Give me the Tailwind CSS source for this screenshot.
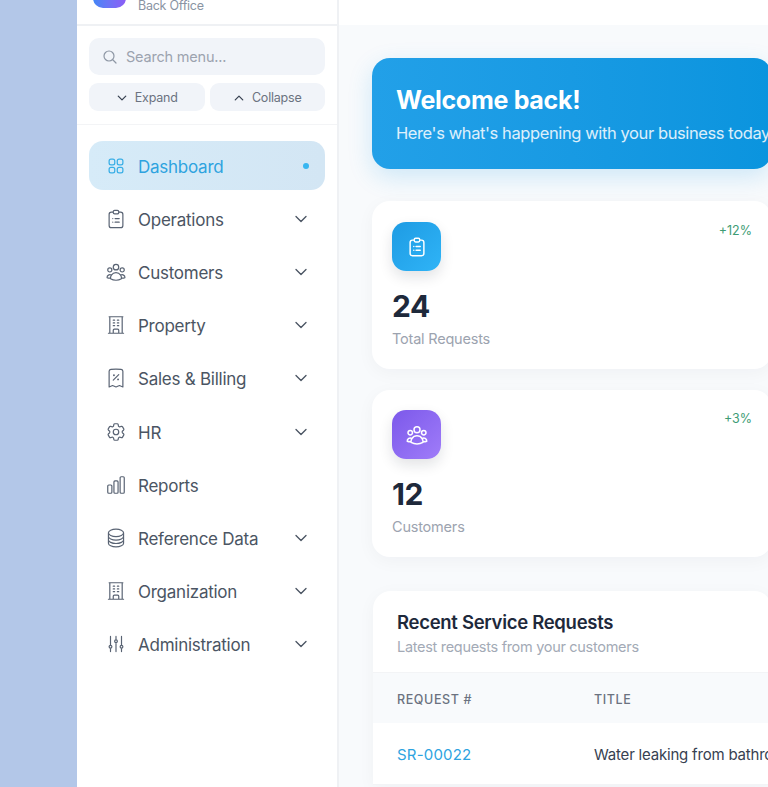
<!DOCTYPE html>
<html lang="en">
<head>
    <meta charset="UTF-8">
    <meta name="viewport" content="width=device-width, initial-scale=1.0">
    <title>Back Office</title>
    <script src="https://cdn.jsdelivr.net/npm/@tailwindcss/browser@4"></script>
</head>
<body class="bg-[#b3c7e8] h-[787px] overflow-hidden font-['Inter',sans-serif]">
    <div class="ml-[77px] w-[760px] h-[787px] flex bg-[#f8fafc]">
        <!-- sidebar -->
        <aside class="w-[262px] shrink-0 bg-white border-r-2 border-[#eff1f4]">
            <div class="h-[26px] border-b-2 border-[#eff1f4] px-4 overflow-hidden relative">
                <div class="absolute left-4 top-[-37px] w-[33px] h-[45px] rounded-[10px] bg-gradient-to-r from-[#3f86f6] to-[#8b5cf6]"></div>
                <span class="absolute left-[61px] top-[-2px] text-[12.5px] leading-4 tracking-[-0.25px] text-[#8a94a3]">Back Office</span>
            </div>
            <div class="px-3 pt-3 pb-[13px] border-b border-[#f3f4f6]">
                <div class="h-[37px] rounded-[10px] bg-[#f1f4f9] flex items-center pl-[13px] gap-[8px]">
                    <svg class="w-4 h-4 text-[#8e97a5]" fill="none" viewBox="0 0 24 24" stroke="currentColor" stroke-width="1.8"><path stroke-linecap="round" stroke-linejoin="round" d="m21 21-5.197-5.197m0 0A7.5 7.5 0 1 0 5.196 5.196a7.5 7.5 0 0 0 10.607 10.607Z"/></svg>
                    <span class="text-[14.5px] tracking-[-0.2px] text-[#9ca3af]">Search menu...</span>
                </div>
                <div class="flex gap-[5px] mt-2">
                    <button class="flex-1 h-7 pt-[2px] rounded-[9px] bg-[#f1f4f9] flex items-center justify-center gap-[7px] text-[12.5px] tracking-[-0.2px] text-[#6b7280]">
                        <svg class="w-3 h-3 text-[#374151]" fill="none" viewBox="0 0 24 24" stroke="currentColor" stroke-width="2.5"><path stroke-linecap="round" stroke-linejoin="round" d="m19.5 8.25-7.5 7.5-7.5-7.5"/></svg>Expand
                    </button>
                    <button class="flex-1 h-7 pt-[2px] rounded-[9px] bg-[#f1f4f9] flex items-center justify-center gap-[7px] text-[12.5px] tracking-[-0.2px] text-[#6b7280]">
                        <svg class="w-3 h-3 text-[#374151]" fill="none" viewBox="0 0 24 24" stroke="currentColor" stroke-width="2.5"><path stroke-linecap="round" stroke-linejoin="round" d="m4.5 15.75 7.5-7.5 7.5 7.5"/></svg>Collapse
                    </button>
                </div>
            </div>
            <nav class="px-3 pt-4 flex flex-col gap-1 text-[17px] leading-[26px] tracking-[-0.25px] text-[#4b5563]">
                <a class="h-[49.2px] rounded-[14px] bg-gradient-to-r from-[#d6ebf8] to-[#d3e6f4] flex items-center pl-[17px] pr-4 gap-[12px] text-[#2ea3df]">
                    <svg class="w-5 h-5 shrink-0 text-[#38aee6]" fill="none" viewBox="0 0 24 24" stroke="currentColor" stroke-width="1.5"><path stroke-linecap="round" stroke-linejoin="round" d="M3.75 6A2.25 2.25 0 0 1 6 3.75h2.25A2.25 2.25 0 0 1 10.5 6v2.25a2.25 2.25 0 0 1-2.25 2.25H6a2.25 2.25 0 0 1-2.25-2.25V6ZM3.75 15.75A2.25 2.25 0 0 1 6 13.5h2.25a2.25 2.25 0 0 1 2.25 2.25V18a2.25 2.25 0 0 1-2.25 2.25H6A2.25 2.25 0 0 1 3.75 18v-2.25ZM13.5 6a2.25 2.25 0 0 1 2.25-2.25H18A2.25 2.25 0 0 1 20.25 6v2.25A2.25 2.25 0 0 1 18 10.5h-2.25a2.25 2.25 0 0 1-2.25-2.25V6ZM13.5 15.75a2.25 2.25 0 0 1 2.25-2.25H18a2.25 2.25 0 0 1 2.25 2.25V18A2.25 2.25 0 0 1 18 20.25h-2.25A2.25 2.25 0 0 1 13.5 18v-2.25Z"/></svg>
                    <span class="flex-1 pt-[2px]">Dashboard</span>
                    <span class="w-[6px] h-[6px] rounded-full bg-[#38b6f0]"></span>
                </a>
                <a class="h-[49.2px] flex items-center pl-4 pr-4 gap-[11px]">
                    <svg class="w-[22px] h-[22px] shrink-0 text-[#596373]" fill="none" viewBox="0 0 24 24" stroke="currentColor" stroke-width="1.3"><rect x="4.5" y="4.5" width="15" height="17" rx="2.5"/><rect x="9" y="2.5" width="6" height="4" rx="1.5" fill="white"/><path stroke-linecap="round" d="M8.5 11.5h.01M11 11.5h4.5M8.5 15.5h.01M11 15.5h4.5"/></svg>
                    <span class="flex-1 pt-[2px]">Operations</span>
                    <svg class="w-4 h-4 shrink-0" fill="none" viewBox="0 0 24 24" stroke="currentColor" stroke-width="2"><path stroke-linecap="round" stroke-linejoin="round" d="m19.5 8.25-7.5 7.5-7.5-7.5"/></svg>
                </a>
                <a class="h-[49.2px] flex items-center pl-4 pr-4 gap-[11px]">
                    <svg class="w-[22px] h-[22px] shrink-0 text-[#596373]" fill="none" viewBox="0 0 24 24" stroke="currentColor" stroke-width="1.3"><path stroke-linecap="round" stroke-linejoin="round" d="M18 18.72a9.094 9.094 0 0 0 3.741-.479 3 3 0 0 0-4.682-2.72m.94 3.198.001.031c0 .225-.012.447-.037.666A11.944 11.944 0 0 1 12 21c-2.17 0-4.207-.576-5.963-1.584A6.062 6.062 0 0 1 6 18.719m12 0a5.971 5.971 0 0 0-.941-3.197m0 0A5.995 5.995 0 0 0 12 12.75a5.995 5.995 0 0 0-5.058 2.772m0 0a3 3 0 0 0-4.681 2.72 8.986 8.986 0 0 0 3.74.477m.94-3.197a5.971 5.971 0 0 0-.94 3.197M15 6.75a3 3 0 1 1-6 0 3 3 0 0 1 6 0Zm6 3a2.25 2.25 0 1 1-4.5 0 2.25 2.25 0 0 1 4.5 0Zm-13.5 0a2.25 2.25 0 1 1-4.5 0 2.25 2.25 0 0 1 4.5 0Z"/></svg>
                    <span class="flex-1 pt-[2px]">Customers</span>
                    <svg class="w-4 h-4 shrink-0" fill="none" viewBox="0 0 24 24" stroke="currentColor" stroke-width="2"><path stroke-linecap="round" stroke-linejoin="round" d="m19.5 8.25-7.5 7.5-7.5-7.5"/></svg>
                </a>
                <a class="h-[49.2px] flex items-center pl-4 pr-4 gap-[11px]">
                    <svg class="w-[22px] h-[22px] shrink-0 text-[#596373]" fill="none" viewBox="0 0 24 24" stroke="currentColor" stroke-width="1.3"><path stroke-linecap="round" stroke-linejoin="round" d="M3.75 21h16.5M4.5 3h15M5.25 3v18m13.5-18v18M9 6.75h1.5m-1.5 3h1.5m-1.5 3h1.5m3-6H15m-1.5 3H15m-1.5 3H15M9 21v-3.375c0-.621.504-1.125 1.125-1.125h3.75c.621 0 1.125.504 1.125 1.125V21"/></svg>
                    <span class="flex-1 pt-[2px]">Property</span>
                    <svg class="w-4 h-4 shrink-0" fill="none" viewBox="0 0 24 24" stroke="currentColor" stroke-width="2"><path stroke-linecap="round" stroke-linejoin="round" d="m19.5 8.25-7.5 7.5-7.5-7.5"/></svg>
                </a>
                <a class="h-[49.2px] flex items-center pl-4 pr-4 gap-[11px]">
                    <svg class="w-[22px] h-[22px] shrink-0 text-[#596373]" fill="none" viewBox="0 0 24 24" stroke="currentColor" stroke-width="1.3"><path stroke-linecap="round" stroke-linejoin="round" d="m9 14.25 6-6m4.5-3.493V21.75l-3.75-1.5-3.75 1.5-3.75-1.5-3.75 1.5V4.757c0-1.108.806-2.057 1.907-2.185a48.507 48.507 0 0 1 11.186 0c1.1.128 1.907 1.077 1.907 2.185ZM9.75 9h.008v.008H9.75V9Zm.375 0a.375.375 0 1 1-.75 0 .375.375 0 0 1 .75 0Zm4.125 4.5h.008v.008h-.008V13.5Zm.375 0a.375.375 0 1 1-.75 0 .375.375 0 0 1 .75 0Z"/></svg>
                    <span class="flex-1 pt-[2px]">Sales &amp; Billing</span>
                    <svg class="w-4 h-4 shrink-0" fill="none" viewBox="0 0 24 24" stroke="currentColor" stroke-width="2"><path stroke-linecap="round" stroke-linejoin="round" d="m19.5 8.25-7.5 7.5-7.5-7.5"/></svg>
                </a>
                <a class="h-[49.2px] flex items-center pl-4 pr-4 gap-[11px]">
                    <svg class="w-[22px] h-[22px] shrink-0 text-[#596373]" fill="none" viewBox="0 0 24 24" stroke="currentColor" stroke-width="1.3"><path stroke-linecap="round" stroke-linejoin="round" d="M9.594 3.94c.09-.542.56-.94 1.11-.94h2.593c.55 0 1.02.398 1.11.94l.213 1.281c.063.374.313.686.645.87.074.04.147.083.22.127.325.196.72.257 1.075.124l1.217-.456a1.125 1.125 0 0 1 1.37.49l1.296 2.247a1.125 1.125 0 0 1-.26 1.431l-1.003.827c-.293.241-.438.613-.43.992a7.723 7.723 0 0 1 0 .255c-.008.378.137.75.43.991l1.004.827c.424.35.534.955.26 1.43l-1.298 2.247a1.125 1.125 0 0 1-1.369.491l-1.217-.456c-.355-.133-.75-.072-1.076.124a6.47 6.47 0 0 1-.22.128c-.331.183-.581.495-.644.869l-.213 1.281c-.09.543-.56.94-1.11.94h-2.594c-.55 0-1.019-.398-1.11-.94l-.213-1.281c-.062-.374-.312-.686-.644-.87a6.52 6.52 0 0 1-.22-.127c-.325-.196-.72-.257-1.076-.124l-1.217.456a1.125 1.125 0 0 1-1.369-.49l-1.297-2.247a1.125 1.125 0 0 1 .26-1.431l1.004-.827c.292-.24.437-.613.43-.991a6.932 6.932 0 0 1 0-.255c.007-.38-.138-.751-.43-.992l-1.004-.827a1.125 1.125 0 0 1-.26-1.43l1.297-2.247a1.125 1.125 0 0 1 1.37-.491l1.216.456c.356.133.751.072 1.076-.124.072-.044.146-.086.22-.128.332-.183.582-.495.644-.869l.214-1.28Z"/><path stroke-linecap="round" stroke-linejoin="round" d="M15 12a3 3 0 1 1-6 0 3 3 0 0 1 6 0Z"/></svg>
                    <span class="flex-1 pt-[2px]">HR</span>
                    <svg class="w-4 h-4 shrink-0" fill="none" viewBox="0 0 24 24" stroke="currentColor" stroke-width="2"><path stroke-linecap="round" stroke-linejoin="round" d="m19.5 8.25-7.5 7.5-7.5-7.5"/></svg>
                </a>
                <a class="h-[49.2px] flex items-center pl-4 pr-4 gap-[11px]">
                    <svg class="w-[22px] h-[22px] shrink-0 text-[#596373]" fill="none" viewBox="0 0 24 24" stroke="currentColor" stroke-width="1.3"><path stroke-linecap="round" stroke-linejoin="round" d="M3 13.125C3 12.504 3.504 12 4.125 12h2.25c.621 0 1.125.504 1.125 1.125v6.75C7.5 20.496 6.996 21 6.375 21h-2.25A1.125 1.125 0 0 1 3 19.875v-6.75ZM9.75 8.625c0-.621.504-1.125 1.125-1.125h2.25c.621 0 1.125.504 1.125 1.125v11.25c0 .621-.504 1.125-1.125 1.125h-2.25a1.125 1.125 0 0 1-1.125-1.125V8.625ZM16.5 4.125c0-.621.504-1.125 1.125-1.125h2.25C20.496 3 21 3.504 21 4.125v15.75c0 .621-.504 1.125-1.125 1.125h-2.25a1.125 1.125 0 0 1-1.125-1.125V4.125Z"/></svg>
                    <span class="flex-1 pt-[2px]">Reports</span>
                </a>
                <a class="h-[49.2px] flex items-center pl-4 pr-4 gap-[11px]">
                    <svg class="w-[22px] h-[22px] shrink-0 text-[#596373]" fill="none" viewBox="0 0 24 24" stroke="currentColor" stroke-width="1.3"><path stroke-linecap="round" stroke-linejoin="round" d="M20.25 6.375c0 2.278-3.694 4.125-8.25 4.125S3.75 8.653 3.75 6.375m16.5 0c0-2.278-3.694-4.125-8.25-4.125S3.75 4.097 3.75 6.375m16.5 0v11.25c0 2.278-3.694 4.125-8.25 4.125s-8.25-1.847-8.25-4.125V6.375m16.5 0v3.75m-16.5-3.75v3.75m16.5 0v3.75C20.25 16.153 16.556 18 12 18s-8.25-1.847-8.25-4.125v-3.75m16.5 0c0 2.278-3.694 4.125-8.25 4.125s-8.25-1.847-8.25-4.125"/></svg>
                    <span class="flex-1 pt-[2px]">Reference Data</span>
                    <svg class="w-4 h-4 shrink-0" fill="none" viewBox="0 0 24 24" stroke="currentColor" stroke-width="2"><path stroke-linecap="round" stroke-linejoin="round" d="m19.5 8.25-7.5 7.5-7.5-7.5"/></svg>
                </a>
                <a class="h-[49.2px] flex items-center pl-4 pr-4 gap-[11px]">
                    <svg class="w-[22px] h-[22px] shrink-0 text-[#596373]" fill="none" viewBox="0 0 24 24" stroke="currentColor" stroke-width="1.3"><path stroke-linecap="round" stroke-linejoin="round" d="M3.75 21h16.5M4.5 3h15M5.25 3v18m13.5-18v18M9 6.75h1.5m-1.5 3h1.5m-1.5 3h1.5m3-6H15m-1.5 3H15m-1.5 3H15M9 21v-3.375c0-.621.504-1.125 1.125-1.125h3.75c.621 0 1.125.504 1.125 1.125V21"/></svg>
                    <span class="flex-1 pt-[2px]">Organization</span>
                    <svg class="w-4 h-4 shrink-0" fill="none" viewBox="0 0 24 24" stroke="currentColor" stroke-width="2"><path stroke-linecap="round" stroke-linejoin="round" d="m19.5 8.25-7.5 7.5-7.5-7.5"/></svg>
                </a>
                <a class="h-[49.2px] flex items-center pl-4 pr-4 gap-[11px]">
                    <svg class="w-[22px] h-[22px] shrink-0 text-[#596373]" fill="none" viewBox="0 0 24 24" stroke="currentColor" stroke-width="1.3"><path stroke-linecap="round" stroke-linejoin="round" d="M6 13.5V3.75m0 9.75a1.5 1.5 0 0 1 0 3m0-3a1.5 1.5 0 0 0 0 3m0 3.75V16.5m12-3V3.75m0 9.75a1.5 1.5 0 0 1 0 3m0-3a1.5 1.5 0 0 0 0 3m0 3.75V16.5m-6-9V3.75m0 3.75a1.5 1.5 0 0 1 0 3m0-3a1.5 1.5 0 0 0 0 3m0 9.75V10.5"/></svg>
                    <span class="flex-1 pt-[2px]">Administration</span>
                    <svg class="w-4 h-4 shrink-0" fill="none" viewBox="0 0 24 24" stroke="currentColor" stroke-width="2"><path stroke-linecap="round" stroke-linejoin="round" d="m19.5 8.25-7.5 7.5-7.5-7.5"/></svg>
                </a>
            </nav>
        </aside>

        <!-- main -->
        <main class="flex-1 min-w-0">
            <div class="h-[25px] bg-white"></div>
            <div class="pl-[33px] w-[433px] pt-[33px] flex flex-col">
                <section class="h-[111px] rounded-[18px] bg-gradient-to-r from-[#22a0e8] to-[#0a94de] shadow-[0_8px_24px_rgba(14,150,225,0.18)] pl-6 pt-[25px] text-white whitespace-nowrap overflow-hidden">
                    <h1 class="text-[25px] leading-[34px] font-bold tracking-[-0.3px]">Welcome back!</h1>
                    <p class="text-[16.5px] leading-6 mt-1 tracking-[-0.4px] text-white/85">Here's what's happening with your business today</p>
                </section>

                <section class="mt-8 h-[168px] rounded-[18px] bg-white shadow-[0_4px_18px_rgba(15,23,42,0.04)] px-5 pt-[21px] relative">
                    <span class="absolute right-5 top-[22px] text-[12.5px] leading-4 font-normal text-[#3d9c74]">+12%</span>
                    <div class="w-[49px] h-[49px] rounded-[14px] bg-gradient-to-br from-[#1e9be3] to-[#2fb4f7] shadow-[0_6px_14px_rgba(15,23,42,0.12)] flex items-center justify-center">
                        <svg class="w-[22px] h-[22px] text-white" fill="none" viewBox="0 0 24 24" stroke="currentColor" stroke-width="1.6"><rect x="4.5" y="4.5" width="15" height="17" rx="2.5"/><rect x="9" y="2.5" width="6" height="4" rx="1.5" fill="#22a5ea"/><path stroke-linecap="round" d="M8.5 11.5h.01M11 11.5h4.5M8.5 15.5h.01M11 15.5h4.5"/></svg>
                    </div>
                    <div class="mt-[15px] text-[30px] leading-[40px] font-bold tracking-[-0.4px] text-[#1e293b]">24</div>
                    <div class="mt-[3px] text-[14.5px] leading-5 tracking-[-0.2px] text-[#9ca3af]">Total Requests</div>
                </section>

                <section class="mt-[21px] h-[167px] rounded-[18px] bg-white shadow-[0_4px_18px_rgba(15,23,42,0.04)] px-5 pt-5 relative">
                    <span class="absolute right-5 top-[21px] text-[12.5px] leading-4 font-normal text-[#3d9c74]">+3%</span>
                    <div class="w-[49px] h-[49px] rounded-[14px] bg-gradient-to-br from-[#7c58ea] to-[#a07cf9] shadow-[0_6px_14px_rgba(15,23,42,0.12)] flex items-center justify-center">
                        <svg class="w-6 h-6 text-white" fill="none" viewBox="0 0 24 24" stroke="currentColor" stroke-width="1.5"><path stroke-linecap="round" stroke-linejoin="round" d="M18 18.72a9.094 9.094 0 0 0 3.741-.479 3 3 0 0 0-4.682-2.72m.94 3.198.001.031c0 .225-.012.447-.037.666A11.944 11.944 0 0 1 12 21c-2.17 0-4.207-.576-5.963-1.584A6.062 6.062 0 0 1 6 18.719m12 0a5.971 5.971 0 0 0-.941-3.197m0 0A5.995 5.995 0 0 0 12 12.75a5.995 5.995 0 0 0-5.058 2.772m0 0a3 3 0 0 0-4.681 2.72 8.986 8.986 0 0 0 3.74.477m.94-3.197a5.971 5.971 0 0 0-.94 3.197M15 6.75a3 3 0 1 1-6 0 3 3 0 0 1 6 0Zm6 3a2.25 2.25 0 1 1-4.5 0 2.25 2.25 0 0 1 4.5 0Zm-13.5 0a2.25 2.25 0 1 1-4.5 0 2.25 2.25 0 0 1 4.5 0Z"/></svg>
                    </div>
                    <div class="mt-[15px] text-[30px] leading-[40px] font-bold tracking-[-0.4px] text-[#1e293b]">12</div>
                    <div class="mt-[3px] text-[14.5px] leading-5 tracking-[-0.2px] text-[#9ca3af]">Customers</div>
                </section>

                <section class="mt-[34px] ml-px rounded-t-[18px] bg-white shadow-[0_4px_18px_rgba(15,23,42,0.04)] whitespace-nowrap overflow-hidden">
                    <div class="h-[82px] pl-6 pt-[18px] border-b border-[#f3f4f6]">
                        <h2 class="text-[18.5px] leading-[27px] font-semibold tracking-[-0.3px] text-[#1e293b]">Recent Service Requests</h2>
                        <p class="mt-px text-[14.5px] leading-5 tracking-[-0.3px] text-[#a3aab6]">Latest requests from your customers</p>
                    </div>
                    <div class="h-[50px] pt-1 bg-[#f8fafc] flex items-center pl-6 text-[12.5px] font-medium tracking-[0.6px] text-[#6b7280]">
                        <span class="w-[197px] shrink-0">REQUEST #</span><span>TITLE</span>
                    </div>
                    <div class="h-[62px] pt-1 border-b border-[#f3f4f6] flex items-center pl-6 text-[15px]">
                        <span class="w-[197px] shrink-0 text-[#2ea3df] tracking-[0.2px]">SR-00022</span><span class="text-[#374151] tracking-[-0.2px]">Water leaking from bathroom ceiling</span>
                    </div>
                </section>
            </div>
        </main>
    </div>
</body>
</html>
